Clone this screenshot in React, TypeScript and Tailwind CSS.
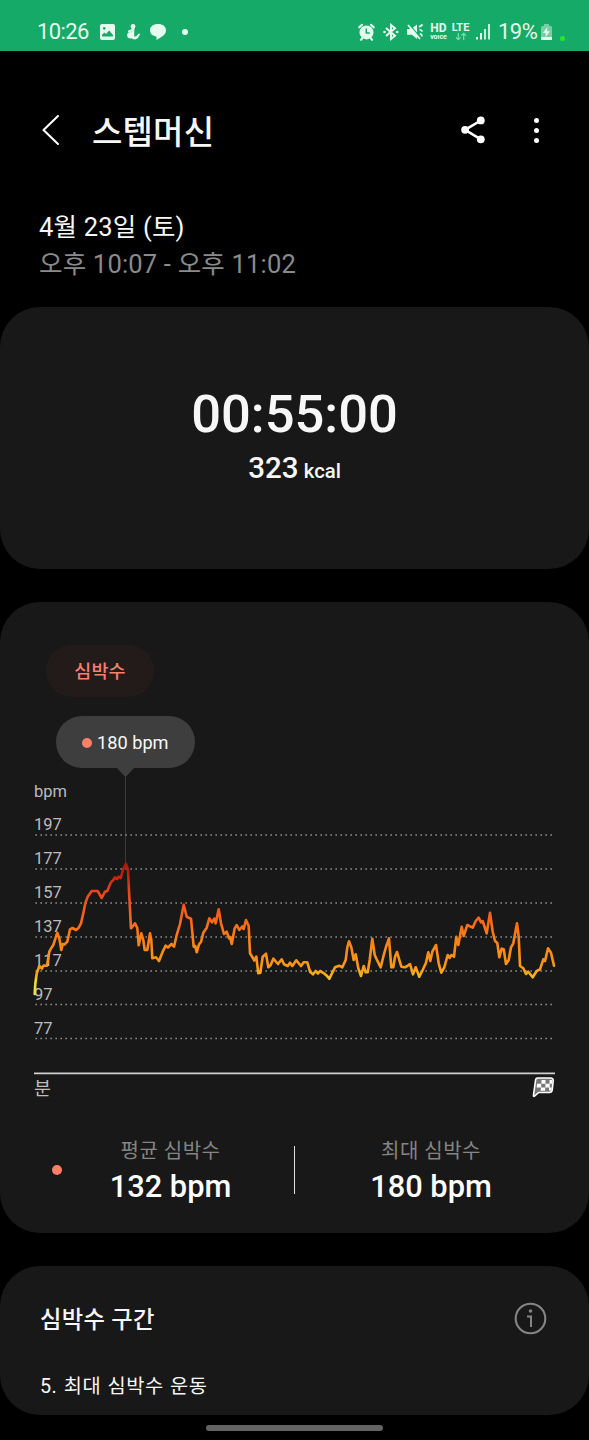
const GRID = [
  {v:197,y:835}, {v:177,y:869}, {v:157,y:903}, {v:137,y:937},
  {v:117,y:971}, {v:97,y:1004.5}, {v:77,y:1038.5},
]

const HEART = `34.7,994 35.3,984 36.7,973.5 39.3,966 42,968.5 43.5,965.5 47,965.7 49.3,951.7 51.3,948 53.3,945 57.3,932.7 59.3,938.3
61.3,950 62.7,944 64.5,944.5 67.3,941.7 70,929.3 72.5,928 76,930 78.5,928 81,923.3 83.3,913.3 85.3,903.3 87.7,896.7 91.7,891 97.7,891
101.7,898 105,891.7 107.3,891 110.7,882.7 113.3,880 115,877.3 117,879 118.7,876.7 120.7,878 123.3,869 126,863.8 128,870
129.3,896.7 131,928.3 133,926 135,923.3 137.3,928 138.7,945.3 141.3,933.3 143.3,940 144.7,950 147.3,950 150,933.3 151.3,940 152.3,958.3
156,957.3 159,961 162.7,951.7 165.7,945.7 168,947.5 171.5,944 174,946.7 176.7,935 180,924 183.7,904.7 186.7,916.7 191,918.7
193.7,946.7 195.3,946 196.7,952.3 199,944.3 201,942 203.3,932.7 206.7,927.7 209.3,918.3 212,922.3 214.3,918.5 215.7,923.3 218.7,909.3
221,923.3 224,934 226.7,931.7 229,938.3 230,937 231.7,944 234.7,928.3 236.7,925 239.3,930 242.3,926.5 243.7,929 246,920 248.7,926
250,953.3 252.7,957.7 254.3,960.5 256.3,956.7 258.3,973.3 260.3,972.7 262.7,956.7 266,953.7 268.3,967.3 270.7,965 273.3,958.7
278,964 281.7,959.3 284,964.3 287.7,966 290,962.7 292.3,966 296.3,960.3 301,966 303.7,962.3 307.3,962.3 310,971.7 313,974.3
315.7,971 318,973.5 320,971 324,973.3 326.7,975.7 329.3,978.7 332,973.3 335,967.3 339.3,965.7 342.3,967.3 345.7,960 347.3,947.3
349,941.3 351.3,947.3 353.7,960 355.7,954.3 358.3,968.3 361,976 363.7,966 365.7,972.3 367.7,972.3 369.7,960 372.3,938.7
374.7,955 377.3,960.7 380.7,967.3 383.3,956.7 386,947 389,938.3 391.3,967.3 393.3,967.3 395,956.7 397,952 401.3,966.7
405,967.3 407.3,966 410,964 413,974.3 415.7,967.3 419.3,976.7 422.7,970 426,962.7 428.3,952.3 430.3,961 432.3,951.7 436,945
438.7,963.3 441.3,972.7 444.3,967.3 447.7,955 449.7,958 451.3,955 454,956.7 456.3,936.7 458.3,945 461.7,926.7 463.7,936 467.3,925
472.7,927.7 475.7,921 478.7,917.7 481,922.3 482.7,921 486.7,933.3 490,912.7 492.7,931.7 495,941 497.3,943 499.3,957.3
501.7,948.7 503.7,949.3 506,964 508.7,960 511,947.3 513.3,943.3 517,923.3 518.7,936.7 520,966 523.3,968.3 526,974 528.3,971.7
532.7,977.3 536.7,971 540,969.3 543.3,959.3 545,961 548,948.3 551,952.7 554,965.7`

function StatusBar(){
  return (
    <div className="h-[51px] bg-[#15aa67] text-[#e6fbef] flex items-center pt-3 pl-[37px] pr-[24px]">
      <span className="text-[22px] w-[53px] whitespace-nowrap tracking-[-0.6px]">10:26</span>
      <svg className="ml-[9px]" width="17" height="18" viewBox="0 0 17 18">
        <path fill="currentColor" fillRule="evenodd" d="M3 1h11q2 0 2 2v12q0 2-2 2H3q-2 0-2-2V3q0-2 2-2ZM3 13.5h11V12l-3.8-4.5L7 11 5.3 9.5 3 12ZM5.2 4a1.4 1.4 0 1 0 .1 0Z" />
      </svg>
      <svg className="ml-[9px]" width="16" height="18" viewBox="0 0 16 18" fill="none" stroke="currentColor" strokeLinecap="round">
        <circle cx="8" cy="3.5" r="2.4" fill="currentColor" stroke="none" />
        <circle cx="5.5" cy="12.3" r="3.3" fill="currentColor" stroke="none" />
        <path strokeWidth="2.8" d="M8 5.500 7.800 14" />
        <path strokeWidth="2" d="M4 8.300 7 7.300M8 15q3.500 1.500 5.200-2.500L14 11.500M9 14.800 12 14" />
      </svg>
      <svg className="ml-2" width="18" height="18" viewBox="0 0 18 18">
        <path fill="currentColor" d="M9 1c4.8 0 8 2.6 8 6.3 0 3.8-3 5.8-5.5 7.2L7.5 17v-3.6C3.6 13.2 1 10.8 1 7.3 1 3.6 4.2 1 9 1Z" />
      </svg>
      <span className="ml-[15px] size-[6px] rounded-full bg-current" />
      <div className="ml-auto flex items-center">
        <svg width="17" height="18" viewBox="0 0 17 18">
          <path fill="none" stroke="currentColor" strokeWidth="2.2" strokeLinecap="round" d="M1.3 4.3 4 1.8M15.7 4.3 13 1.8M4 15.5 3 16.700M13 15.5 14 16.700" />
          <circle cx="8.5" cy="9.4" r="7" fill="currentColor" />
          <path fill="none" stroke="#15aa67" strokeWidth="1.5" d="M8.3 5.5v4.600h3.5" />
        </svg>
        <svg className="ml-[8px]" width="16" height="18" viewBox="0 0 16 18" fill="none" stroke="currentColor" strokeWidth="2">
          <path d="M3 5 12 12.8 8 16V2l4 3.200L3 13" />
          <circle cx="1.5" cy="9" r="1.3" fill="currentColor" stroke="none" />
          <circle cx="14.200" cy="9" r="1.3" fill="currentColor" stroke="none" />
        </svg>
        <svg className="ml-[7px]" width="18" height="18" viewBox="0 0 18 18" fill="none" stroke="currentColor">
          <path fill="currentColor" stroke="none" d="M1 6h4l6-4.5V16L6 11.8H1Z" />
          <path stroke="#15aa67" strokeWidth="1.200" d="m3.500 1.500 11.500 14" />
          <path strokeWidth="1.800" d="m2 2 12 14" />
          <path strokeWidth="1.800" d="M13 4q2-1 3.500-2.500M13.500 6.500q2 .5 3 2M14 10.500q2 1 2 3" />
        </svg>
        <div className="ml-[5px] w-[19px] flex flex-col items-center">
          <span className="text-[12px] h-[11px] leading-[11px] font-bold">HD</span>
          <svg width="19" height="7" viewBox="0 0 19 7">
            <text x="9.500" y="5" textAnchor="middle" fontSize="7" fontWeight="700" fill="currentColor">voice</text>
          </svg>
        </div>
        <div className="ml-[3px] w-[19px] flex flex-col items-center">
          <span className="text-[11px] h-[9px] leading-[9px] font-bold">LTE</span>
          <svg width="12" height="9" viewBox="0 0 12 9" fill="none" stroke="#7fdcb0" strokeWidth="1.200">
            <path d="M3.300 1v6.500M1 5.300l2.300 2.300 2.300-2.300M8.700 8V1.500M6.400 3.700l2.300-2.300L11 3.700" />
          </svg>
        </div>
        <svg className="ml-[5px]" width="17" height="17" viewBox="0 0 17 17" fill="currentColor">
          <path d="M1 14h2v2.500H1ZM5 10h2v6.500H5Z" />
          <path d="M9 6h2v10.500H9ZM13 1h2v15.500h-2Z" opacity=".85" />
        </svg>
        <span className="ml-[6px] w-[40px] text-[22px] whitespace-nowrap tracking-[-0.5px]">19%</span>
        <svg className="ml-[2px]" width="13" height="18" viewBox="0 0 13 18">
          <path fill="#79cfa4" d="M4 1h5v2h1.500q1.500 0 1.500 1.500V17H1V4.500Q1 3 2.500 3H4Z" />
          <path fill="currentColor" d="M1 14h11v3H1ZM7.300 4 3 10h3l-.5 4L10 8.300H7Z" />
        </svg>
        <span className="ml-[7px] mt-[13px] size-[5px] rounded-full bg-[#25e82c]" />
      </div>
    </div>
  )
}

function Header(){
  return (
    <div className="h-[256px] pt-[55px]">
      <div className="h-12 flex items-center pl-[41px] pr-[49px]">
        <svg width="20" height="32" viewBox="0 0 20 32" fill="none" stroke="#fff" strokeWidth="2.1" strokeLinecap="round" strokeLinejoin="round">
          <path d="M17 2 2.5 16 17 30" />
        </svg>
        <h1 className="ml-[31px] mt-[5px] text-[33px] font-medium tracking-[0.2px] whitespace-nowrap">스텝머신</h1>
        <svg className="ml-auto" width="26" height="28" viewBox="0 0 26 28" fill="#fff" stroke="#fff">
          <path fill="none" strokeWidth="2.6" d="M19.8 4.5 4.100 13.800 19.8 23.300" />
          <circle cx="4.100" cy="13.8" r="3.9" stroke="none" />
          <circle cx="19.8" cy="4.4" r="3.9" stroke="none" />
          <circle cx="19.8" cy="23.3" r="3.9" stroke="none" />
        </svg>
        <div className="ml-[45px] w-[8px] flex flex-col items-center gap-[5px]">
          <i className="size-[5px] rounded-full bg-white" />
          <i className="size-[5px] rounded-full bg-white" />
          <i className="size-[5px] rounded-full bg-white" />
        </div>
      </div>
      <div className="mt-[55px] pl-[39px] text-[25.5px] leading-[37px] tracking-[0.2px] whitespace-nowrap">
        <div>4월 23일 (토)</div>
        <div className="text-[#8b8b8b]">오후 10:07 - 오후 11:02</div>
      </div>
    </div>
  )
}

function Chart(){
  return (
    <svg className="block w-full h-[334px]" viewBox="0 768 589 334">
      <defs>
        <linearGradient id="heat" gradientUnits="userSpaceOnUse" x1="0" y1="862" x2="0" y2="994">
          <stop offset="0" stopColor="#b51206" />
          <stop offset=".1" stopColor="#c41f0c" />
          <stop offset=".22" stopColor="#e8471c" />
          <stop offset=".4" stopColor="#f9601a" />
          <stop offset=".58" stopColor="#fb8016" />
          <stop offset=".8" stopColor="#fb9a18" />
          <stop offset=".86" stopColor="#f6b01c" />
          <stop offset=".9" stopColor="#f2da22" />
          <stop offset="1" stopColor="#e9e64a" />
        </linearGradient>
      </defs>
      <path d="M117 768h17l-6.5 7q-2 2.5-4 0Z" fill="#3e3e3e" />
      <path d="M125.5 776v90" stroke="#3a3a3a" />
      {GRID.map(g=>(
        <path key={g.v} d={`M35.5 ${g.y}H552`} stroke="#a8a8a8" strokeWidth="1.3" strokeDasharray="1.3 3.7" />
      ))}
      <g fill="#bdbdbd" fontSize="16.5">
        <text x="34" y="797">bpm</text>
        {GRID.map(g=> <text key={g.v} x="34" y={g.y-5}>{g.v}</text>)}
      </g>
      <polyline points={HEART} fill="none" stroke="url(#heat)" strokeWidth="2.6" strokeLinecap="round" strokeLinejoin="round" />
      <path d="M34 1073.3h521" stroke="#d0d0d0" strokeWidth="1.7" />
      <text x="34" y="1094.500" fill="#bdbdbd" fontSize="18.5">분</text>
      {/* bandeira de chegada */}
      <path d="M537.5 1078h13q3 0 2.7 3l-1 9q-.3 2.500-3 2.500h-10.500l-4 3.500q-1.500 1-1.200-1l2-14.500q.3-2.500 2-2.500Z" fill="#777" stroke="#fff" strokeWidth="1.600" strokeLinejoin="round" />
      <path fill="#fff" d="M541.5 1080h4v3.700h-4ZM537 1083.700h4.200v3.700h-4.500ZM545.5 1083.700h4.200v3.700h-4.500ZM541 1087.400h4.200v3.300h-4.500ZM549.500 1080h2.500v3.700h-2.500ZM549 1087.400h2.500v3h-2.500Z" />
    </svg>
  )
}

function Stat({label,value}:{label:string,value:string}){
  return (
    <div className="text-center whitespace-nowrap">
      <div className="text-[20px] leading-7 tracking-[0.5px] text-[#858585]">{label}</div>
      <div className="text-[30.8px] leading-[44px] font-medium text-white">{value}</div>
    </div>
  )
}

export default function App(){
  return (
    <div className="w-[589px] h-[1440px] overflow-hidden bg-black text-[#f7f7f7] font-['Roboto','Noto_Sans_CJK_KR',sans-serif]">
      <StatusBar />
      <Header />

      <div className="h-[262px] rounded-[40px] bg-[#181818] pt-[76px] text-center font-medium">
        <div className="text-[52.5px] leading-[62px]">00:55:00</div>
        <div className="mt-[5px] text-[29.5px] leading-9">323 <span className="-ml-[2px] text-[20.3px]">kcal</span></div>
      </div>

      <div className="mt-[33px] h-[631px] rounded-[40px] bg-[#181818] pt-[43px]">
        <div className="ml-[46px] w-[108px] h-[52px] rounded-full bg-[#231b1a] flex items-center justify-center pt-[3px] text-[18.5px] font-medium tracking-[0.2px] text-[#fb7f6b]">심박수</div>
        <div className="mt-[19px] ml-[56px] w-[139px] h-[52px] rounded-full bg-[#3e3e3e] flex items-center pt-px pl-[26px] text-[18.2px] whitespace-nowrap">
          <span className="size-[10px] mr-[5px] rounded-full bg-[#fb8067]" />
          180 bpm
        </div>
        <Chart />
        <div className="mt-[35px] grid grid-cols-[57px_227px_21px_252px] items-center">
          <span className="ml-[52px] -mt-[7px] size-[10px] rounded-full bg-[#fb8067]" />
          <Stat label="평균 심박수" value="132 bpm" />
          <span className="ml-[10px] -mt-[7px] w-px h-[48px] bg-[#e0e0e0]" />
          <Stat label="최대 심박수" value="180 bpm" />
        </div>
      </div>

      <div className="mt-[33px] h-[149px] rounded-[40px] bg-[#181818] pt-[35px] pl-10 pr-[42px]">
        <div className="h-[34px] flex items-center justify-between">
          <h2 className="mt-[5px] text-[23.3px] font-medium tracking-[0.3px]">심박수 구간</h2>
          <svg width="33" height="33" viewBox="0 0 33 33" fill="none" stroke="#858585">
            <circle cx="16.5" cy="16.5" r="14.8" strokeWidth="2.1" />
            <path d="M13 14.5h4V25" strokeWidth="2" />
            <circle cx="16.5" cy="9" r="1.800" fill="#858585" stroke="none" />
          </svg>
        </div>
        <div className="mt-[38px] text-[19.8px] leading-7 tracking-[0.5px] [word-spacing:1px]">5. 최대 심박수 운동</div>
      </div>
      <div className="mt-[10px] mx-auto w-[177px] h-[6px] rounded-full bg-[#636363]" />
    </div>
  )
}
